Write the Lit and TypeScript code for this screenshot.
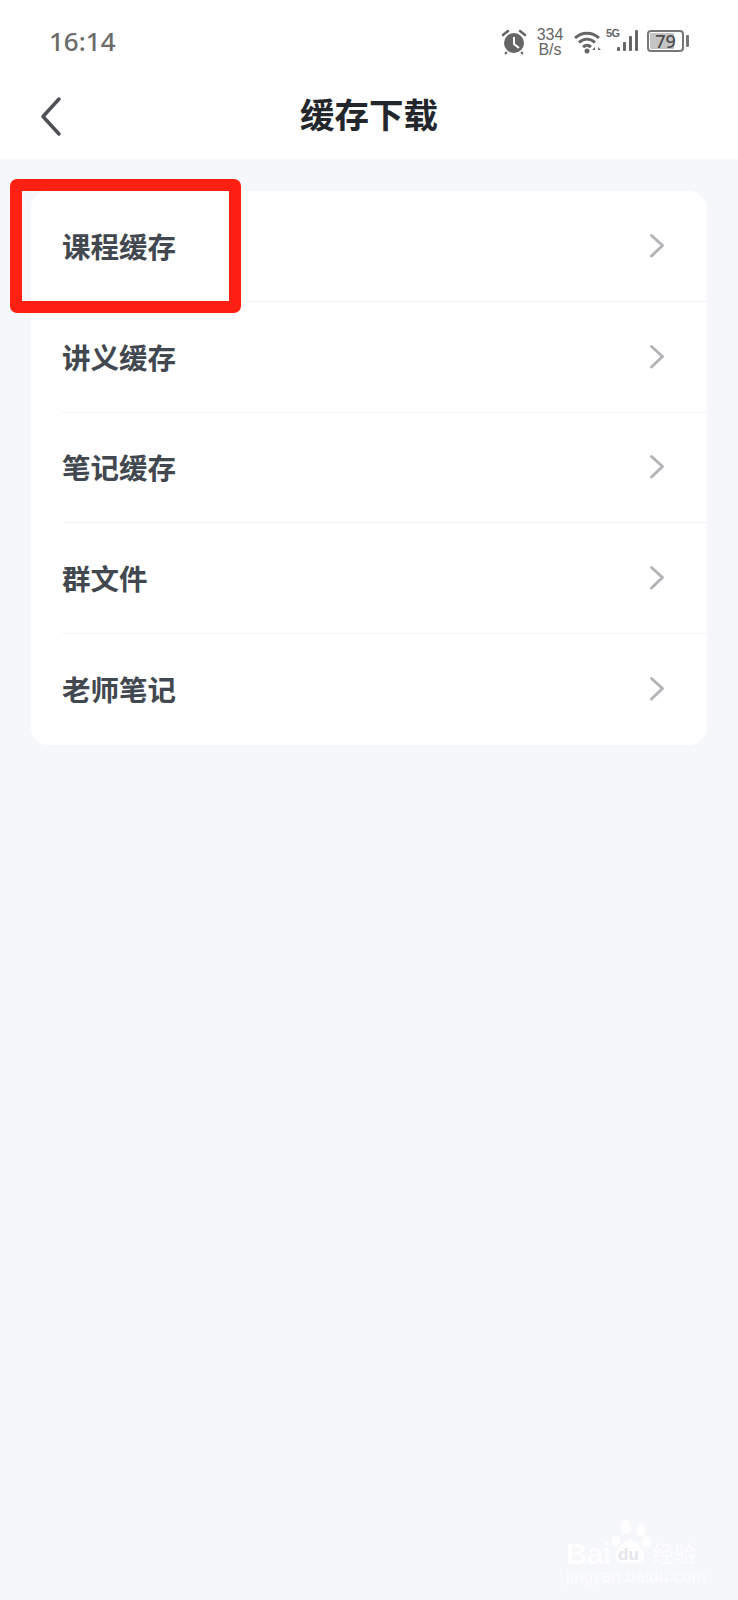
import { LitElement, html, css } from 'lit';
import { customElement } from 'lit/decorators.js';

const ITEMS = ['课程缓存', '讲义缓存', '笔记缓存', '群文件', '老师笔记'];

@customElement('app-root')
export class AppRoot extends LitElement {
  static styles = css`
    :host {
      display: block;
      width: 738px;
      height: 1600px;
      position: relative;
      overflow: hidden;
      background: #f5f7fb;
      font-family: 'Noto Sans CJK SC', 'Noto Sans', sans-serif;
    }

    .top {
      background: #fff;
      height: 159px;
    }

    .status {
      height: 84px;
      box-sizing: border-box;
      padding: 25px 49px 0 49px;
      display: flex;
      align-items: flex-start;
      color: #666;
    }

    .time {
      font-family: 'Noto Sans', sans-serif;
      font-size: 26px;
      font-weight: 500;
      line-height: 32px;
      color: #6b6b6b;
    }

    .status-icons {
      margin: 1px 0 0 auto;
      display: flex;
      align-items: flex-start;
    }

    .alarm { width: 26px; height: 26px; margin-top: 3px; }

    .speed {
      width: 28px;
      margin: 1px 10px 0 9px;
      font-family: 'Liberation Sans', sans-serif;
      font-size: 16px;
      line-height: 15px;
      text-align: center;
      color: #666;
    }

    .wifi { width: 30px; height: 24px; margin-top: 4px; }

    .net { position: relative; width: 41px; height: 28px; margin-left: 2px; }

    .five-g {
      position: absolute;
      left: 0;
      top: 1px;
      font-family: 'Liberation Sans', sans-serif;
      font-weight: 700;
      font-size: 11px;
      line-height: 12px;
      letter-spacing: -0.5px;
    }

    .bars { position: absolute; left: 11px; top: 4px; width: 24px; height: 22px; }

    .battery {
      box-sizing: border-box;
      width: 37px;
      height: 22px;
      margin: 4px 0 0 0;
      border: 2px solid #777;
      border-radius: 4px;
      padding: 1px;
      position: relative;
    }

    .battery-fill {
      height: 100%;
      width: 79%;
      background: #c4c4c4;
      border-radius: 1px;
    }

    .battery-text {
      position: absolute;
      inset: 0;
      text-align: center;
      font-family: 'Noto Sans', sans-serif;
      font-weight: 500;
      font-size: 18px;
      line-height: 18px;
      color: #4c4c4c;
    }

    .battery-tip {
      width: 3px;
      height: 12px;
      margin: 9px 0 0 2px;
      background: #777;
      border-radius: 1px;
    }

    .nav {
      height: 75px;
      display: flex;
      align-items: center;
      justify-content: center;
      position: relative;
    }

    .back {
      position: absolute;
      left: 38px;
      top: 12px;
      width: 26px;
      height: 42px;
    }

    .title {
      font-size: 34.5px;
      line-height: 44px;
      font-weight: 700;
      color: #23272b;
      margin-bottom: 17px;
    }

    .card {
      margin: 32px 31px 0;
      background: #fff;
      border-radius: 18px;
      overflow: hidden;
    }

    .row {
      height: 110.75px;
      box-sizing: border-box;
      margin-left: 31px;
      padding-right: 42px;
      display: flex;
      align-items: center;
      justify-content: space-between;
      border-bottom: 1px solid #f3f4f6;
    }

    .row:last-child { border-bottom: none; }

    .label {
      font-size: 28.5px;
      line-height: 40px;
      font-weight: 700;
      color: #42484f;
    }

    .chevron { width: 16px; height: 26px; }

    .mark {
      position: absolute;
      left: 10px;
      top: 179px;
      width: 231px;
      height: 134px;
      box-sizing: border-box;
      border: 12px solid #fe2012;
      border-radius: 7px;
    }

    .watermark {
      position: absolute;
      left: 566px;
      top: 1520px;
      width: 134px;
      height: 64px;
      color: #fff;
      opacity: 0.9;
    }

    .paw { position: absolute; left: 45px; top: 0; width: 40px; height: 46px; }

    .wm-bai {
      position: absolute;
      left: 0;
      top: 17px;
      font-family: 'Liberation Sans', sans-serif;
      font-weight: 700;
      font-size: 29px;
      line-height: 34px;
    }

    .wm-du {
      position: absolute;
      left: 52px;
      top: 26px;
      font-family: 'Liberation Sans', sans-serif;
      font-weight: 700;
      font-size: 17px;
      line-height: 18px;
      color: #e3e5ea;
    }

    .wm-cn {
      position: absolute;
      left: 86px;
      top: 17px;
      font-weight: 400;
      font-size: 22px;
      line-height: 30px;
    }

    .wm-url {
      position: absolute;
      left: 0;
      top: 47px;
      font-family: 'Liberation Sans', sans-serif;
      font-size: 16.500px;
      line-height: 18px;
      letter-spacing: 0.4px;
      white-space: nowrap;
    }
  `;

  render() {
    return html`
      <div class="top">
        <div class="status">
          <span class="time">16:14</span>
          <div class="status-icons">
            <svg class="alarm" viewBox="0 0 26 26">
              <circle cx="13" cy="14" r="10" fill="#666" />
              <path d="M13 8v7l5 4" fill="none" stroke="#fff" stroke-width="2" />
              <path d="M2 6l5-4M24 6l-5-4" stroke="#666" stroke-width="2.5" stroke-linecap="round" />
              <path d="M6 23l-2 2M20 23l2 2" stroke="#666" stroke-width="2" />
            </svg>
            <div class="speed">334<br />B/s</div>
            <svg class="wifi" viewBox="0 0 30 24" fill="none" stroke="#666" stroke-width="3">
              <path d="M1 8c7-6.500 17-6.500 24 0" />
              <path d="M5 12.500c5-4.500 11-4.500 16 0" />
              <path d="M9 17c3-2.500 5-2.500 8 0" />
              <circle cx="13" cy="21" r="2.500" fill="#666" stroke="none" />
              <path d="M21 17l-3 3h3zM24 17l3 3h-3z" fill="#666" stroke="none" />
            </svg>
            <div class="net">
              <span class="five-g">5G</span>
              <svg class="bars" viewBox="0 0 24 22" fill="#666">
                <rect x="0" y="17" width="3" height="4" rx="1" />
                <rect x="6" y="12" width="3" height="9" rx="1" />
                <rect x="12" y="6" width="3" height="15" rx="1" />
                <rect x="18" y="0" width="3" height="21" rx="1" />
              </svg>
            </div>
            <div class="battery">
              <div class="battery-fill"></div>
              <div class="battery-text">79</div>
            </div>
            <div class="battery-tip"></div>
          </div>
        </div>
        <div class="nav">
          <svg class="back" viewBox="0 0 26 42" fill="none" stroke="#4d5157" stroke-width="3.500" stroke-linecap="round" stroke-linejoin="round">
            <path d="M21 3L5 20.500L21 38" />
          </svg>
          <div class="title">缓存下载</div>
        </div>
      </div>
      <div class="card">
        ${ITEMS.map(
          (item) => html`
            <div class="row">
              <span class="label">${item}</span>
              <svg class="chevron" viewBox="0 0 16 26" fill="none" stroke="#b2b4b7" stroke-width="3" stroke-linecap="round" stroke-linejoin="round">
                <path d="M2.500 2.500L13.500 12.500L2.500 23" />
              </svg>
            </div>
          `
        )}
      </div>
      <div class="mark"></div>
      <div class="watermark">
        <svg class="paw" viewBox="0 0 40 46" fill="#fff">
          <ellipse cx="5" cy="21" rx="4.500" ry="5.500" />
          <ellipse cx="15" cy="7" rx="5.500" ry="7" />
          <ellipse cx="30" cy="10" rx="5" ry="6.500" />
          <ellipse cx="35" cy="22" rx="4.500" ry="6" />
          <path d="M19 20c5 0 8 4 12 9 5 6 2 15-6 14-4-1-8-1-12 0-7 1-11-7-7-13 4-4 7-10 13-10z" />
        </svg>
        <span class="wm-bai">Bai</span>
        <span class="wm-du">du</span>
        <span class="wm-cn">经验</span>
        <span class="wm-url">jingyan.baidu.com</span>
      </div>
    `;
  }
}

declare global {
  interface HTMLElementTagNameMap {
    'app-root': AppRoot;
  }
}
